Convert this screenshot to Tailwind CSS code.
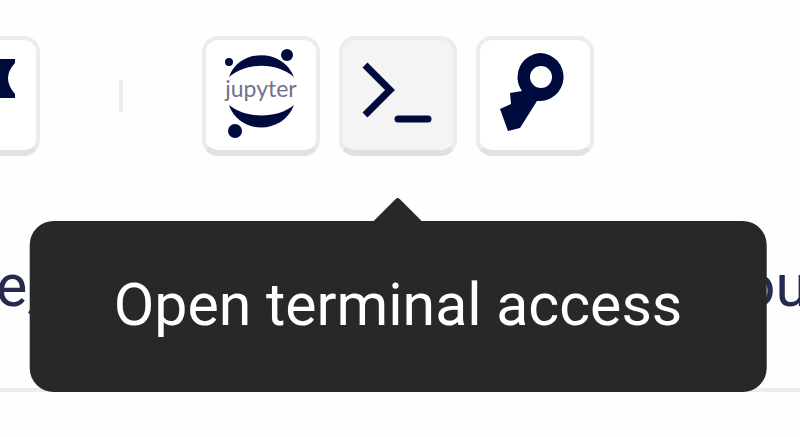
<!DOCTYPE html>
<html lang="en">
<head>
<meta charset="utf-8">
<meta name="viewport" content="width=device-width, initial-scale=1">
<title>Workspace tools</title>
<script src="https://cdn.jsdelivr.net/npm/@tailwindcss/browser@4"></script>
</head>
<body class="overflow-hidden bg-[#fefefe] font-['Roboto',sans-serif] text-[#000b3d]">
<header class="-ml-[78px] flex items-center pt-9">
  <button type="button" aria-label="Bookmark" class="flex h-30 w-[118px] shrink-0 items-center justify-center rounded-2xl border-4 border-b-6 border-[#ececec] border-b-[#e2e2e2] bg-white">
    <svg class="size-20" viewBox="0 0 80 80" fill="currentColor" aria-hidden="true"><path d="M30 4H74V8Q60 23 74 39V43H30Z"/></svg>
  </button>
  <div class="mx-[79px] h-8 w-1 shrink-0 bg-[#ececec]"></div>
  <nav class="flex gap-[19px]" aria-label="Tools">
    <button type="button" aria-label="Open Jupyter" class="flex h-30 w-[118px] shrink-0 items-center justify-center rounded-2xl border-4 border-b-6 border-[#ececec] border-b-[#e2e2e2] bg-white">
      <svg class="h-24 w-20" viewBox="0 0 80 96" fill="currentColor" aria-hidden="true">
        <path d="M8 30C18 1 62 1 73 30C55 15 26 15 8 30Z"/>
        <path d="M8 58C25 72 56 72 73 58C62 88 18 88 8 58Z"/>
        <circle cx="8" cy="15" r="4"/><circle cx="66" cy="8" r="6"/><circle cx="14" cy="84" r="7"/>
        <text x="40" y="50" text-anchor="middle" font-family="Lato, sans-serif" font-size="23" fill="#6f718d">jupyter</text>
      </svg>
    </button>
    <div class="relative">
      <button type="button" aria-label="Open terminal" aria-describedby="terminal-tip" class="flex h-30 w-[118px] shrink-0 items-center justify-center rounded-2xl border-4 border-b-6 border-[#ececec] border-b-[#e0e0e0] bg-[#f4f4f4]">
        <svg class="size-20" viewBox="0 0 80 80" fill="none" stroke="currentColor" stroke-width="7" aria-hidden="true"><path d="M7 10L32 35L7 60"/><path stroke-linecap="round" d="M40 64H70"/></svg>
      </button>
      <div id="terminal-tip" role="tooltip" class="absolute top-full left-1/2 z-10 mt-[65px] -translate-x-1/2 rounded-3xl bg-[#282828] px-21 pt-[46px] pb-[50px] text-[59px] leading-[75px] whitespace-nowrap text-white">
        <svg class="absolute bottom-full left-1/2 h-6 w-12 -translate-x-1/2" viewBox="0 0 48 24" fill="#282828" aria-hidden="true"><path d="M0 24L22 2Q24 0 26 2L48 24Z"/></svg>
        Open terminal access
      </div>
    </div>
    <button type="button" aria-label="Access keys" class="flex h-30 w-[118px] shrink-0 items-center justify-center rounded-2xl border-4 border-b-6 border-[#ececec] border-b-[#e2e2e2] bg-white">
      <svg class="size-20 overflow-visible" viewBox="0 0 80 80" fill="currentColor" aria-hidden="true"><path fill-rule="evenodd" d="M46 -2A24 24 0 1 1 43 46L42 46L25 73L13 76L9 65L5 54L16 49L15 38L27 36A24 24 0 0 1 46 -2ZM46 11A11 11 0 1 0 46 33A11 11 0 0 0 46 11Z"/></svg>
    </button>
  </nav>
</header>
<main class="border-b-4 border-[#ececec] pt-22 pb-15">
  <p class="-mr-2 -ml-1 flex justify-between text-[59px] leading-[84px] text-[#252b50]"><span>e,</span><span>ou</span></p>
</main>
</body>
</html>
